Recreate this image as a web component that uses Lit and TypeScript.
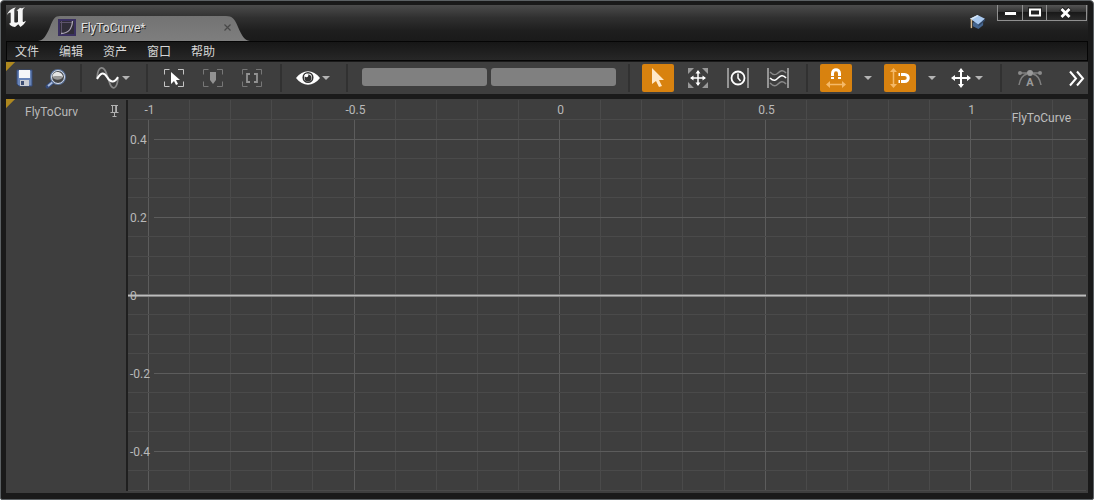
import { LitElement, html, svg, css } from "lit";
import { customElement, state } from "lit/decorators.js";

const caret = html`<svg class="caret" width="8" height="4" viewBox="0 0 8 4" aria-hidden="true"><path d="M0 0h8L4 4z" fill="currentColor" /></svg>`;

const corners = (color: string) => svg`<path d="M.5 5.500V.5h5M14 .5h5.500v5M19.500 12.500v5H14M5.500 17.500h-5v-5" fill="none" stroke=${color} />`;

const MENUS = ["文件", "编辑", "资产", "窗口", "帮助"];

@customElement("curve-graph")
class CurveGraph extends LitElement {
  @state() private w = 960;
  @state() private h = 394;
  private observer?: ResizeObserver;

  static styles = css`
    :host { display: block; position: relative; min-width: 0; overflow: hidden; }
    svg { position: absolute; inset: 0; display: block; width: 100%; height: 100%; }
    text { font: 12px Roboto, "Noto Sans", sans-serif; fill: #b9b9b9; }
    .minor { stroke: #4a4a4a; }
    .major { stroke: #5c5c5c; }
    .name { position: absolute; top: 11px; right: 17px; font: 12px/16px Roboto, "Noto Sans", sans-serif; color: #bdbdbd; }
  `;

  connectedCallback() {
    super.connectedCallback();
    this.observer = new ResizeObserver(([entry]) => {
      this.w = Math.round(entry.contentRect.width);
      this.h = Math.round(entry.contentRect.height);
    });
    this.observer.observe(this);
  }

  disconnectedCallback() {
    this.observer?.disconnect();
    super.disconnectedCallback();
  }

  render() {
    const { w, h } = this;
    const unitX = w * 0.4282;
    const unitY = 390;
    const zeroX = w * 0.4496;
    const zeroY = Math.round(h / 2) - 1;
    const px = (v: number) => Math.floor(v) + 0.5;
    const lines = [];
    const labels = [];
    for (let i = -12; i <= 14; i++) {
      const x = px(zeroX + (i * unitX) / 10);
      if (x < 0 || x > w - 3) continue;
      const major = i % 5 === 0;
      lines.push(svg`<line class=${major ? "major" : "minor"} x1=${x} x2=${x} y1=${major ? 20 : 1} y2=${h - 2} />`);
      if (major) labels.push(svg`<text x=${x + 1} y="15" text-anchor="middle">${i / 10}</text>`);
    }
    for (let i = -12; i <= 12; i++) {
      const y = px(zeroY - (i * unitY) / 20);
      if (y < 8 || y > h - 1) continue;
      const major = i % 4 === 0;
      lines.push(svg`<line class=${major ? "major" : "minor"} x1=${major ? 26 : 0} x2=${w - 2} y1=${y} y2=${y} />`);
      if (major) labels.push(svg`<text x="2" y=${y + 4}>${i / 20}</text>`);
    }
    return html`
      <svg role="img" aria-label="FlyToCurve">
        ${lines}
        <rect x="0" y=${zeroY - 1} width=${w - 2} height="1" fill="#777" />
        <rect x="0" y=${zeroY} width=${w - 2} height="1" fill="#bdbdbd" />
        <rect x="0" y=${zeroY + 1} width=${w - 2} height="1" fill="#858585" />
        ${labels}
      </svg>
      <div class="name">FlyToCurve</div>
    `;
  }
}

@customElement("app-root")
class AppRoot extends LitElement {
  static styles = css`
    :host {
      display: flex; flex-direction: column; box-sizing: border-box; min-height: 100vh;
      padding: 4px 5px 6px; border: 1px solid #5c6164; border-radius: 4px 4px 2px 2px;
      background: #1a1a1a; color: #c8c8c8;
      font: 12px/16px Roboto, "Noto Sans CJK SC", "Noto Sans", sans-serif;
    }
    * { box-sizing: border-box; }
    button { display: flex; align-items: center; justify-content: center; margin: 0; padding: 0; border: 0; background: none; color: #b4b4b4; font: inherit; }
    svg { display: block; flex: none; overflow: visible; }
    .title { display: flex; align-items: flex-start; height: 36px; padding-left: 1px; background: linear-gradient(#4c4c4c, #303030 35%, #1e1e1e 72%, #1a1a1a); }
    .logo { margin-top: 2px; }
    .tab { position: relative; display: flex; align-items: center; align-self: flex-end; width: 212px; height: 25px; margin-left: 10px; padding: 0 19px 2px 20px; color: #e2e2e2; text-shadow: 1px 1px 0 #222; }
    .shape { position: absolute; inset: 0; width: 100%; height: 100%; }
    .tab > * + * { position: relative; }
    .tab-name { flex: 1; margin-left: 5px; }
    .close { width: 8px; height: 8px; }
    .tutorial { margin: 10px 11px 0 auto; }
    .caption { display: flex; height: 16px; margin-right: 1px; border: 1px solid #909090; border-top: 0; }
    .caption button { width: 25px; background: linear-gradient(#555, #333 45%, #191919 50%, #2b2b2b); border-right: 1px solid #909090; }
    .caption button + button { width: 24px; }
    .caption button:last-child { width: 39px; padding-right: 2px; border: 0; }
    .menus { display: flex; height: 20px; border: 1px solid #050505; background: linear-gradient(#161616, #272727); }
    .menus button { width: 44px; height: 18px; color: #d6d6d6; justify-content: flex-start; padding: 1px 0 0 8px; }
    .tools, .outline { background: linear-gradient(135deg, #ae881f 6px, #3e3e3e 7px); }
    .tools { display: flex; align-items: center; height: 32px; margin-top: 1px; overflow: hidden; }
    .group { display: flex; align-items: center; flex: none; padding: 0 4px; gap: 8px; }
    .first { padding: 0 0 0 2px; gap: 0; }
    .frames { padding: 0 4px 0 2px; gap: 7px; }
    .flush { padding: 0; }
    .fields { gap: 4px; padding: 0 4px 0 6px; }
    .sep { flex: none; width: 2px; height: 28px; margin: 0 8px; background: #313131; }
    .tool { width: 32px; height: 28px; border-radius: 2px; }
    .on { background: #d8820f; }
    .drop { width: 16px; height: 28px; }
    .split { width: 48px; height: 28px; padding-right: 2px; gap: 2px; }
    .field { width: 125px; height: 18px; margin: 0 0 2px; padding: 0 4px; border: 0; border-radius: 3px; background: #808080; color: #111; font: inherit; outline: 0; }
    .more { margin-left: auto; width: 22px; height: 28px; flex: none; color: #fff; }
    .work { flex: 1; display: grid; grid-template-columns: 120px 2px minmax(0, 1fr); margin-top: 5px; background: #3e3e3e; }
    .outline { display: flex; align-items: flex-start; padding: 5px 7px 0 19px; }
    .curve { width: 53px; overflow: hidden; white-space: nowrap; color: #b9b9b9; }
    .pin { margin-left: auto; }
    .divider { background: #1f1f1f; margin: 1px 0 2px; }
  `;

  private sep() {
    return html`<span class="sep"></span>`;
  }

  render() {
    return html`
      <header class="title">
        <svg class="logo" width="21" height="21" viewBox="0 0 21 20" preserveAspectRatio="none" fill="#f6f6f6" role="img" aria-label="Unreal Engine">
          <path d="M0 7.500C1.500 3.500 5 1 9 .5 7.500 1.500 7.300 2.300 7.300 3.500v10.200c0 1.500 2.500 1.500 3.700.3V5c0-1.200-.5-1.600-1.500-1.800C11 2.500 12 2 13 .8c1 .8 3 .2 5-.8-1.500 1.300-2.300 2.300-2.300 3.700V13c0 1.500 1 1.700 3.300.2-1.200 2.800-3.500 4.500-5.500 5.800L11.300 16.500 8 19c-3.500-.2-5.700-2-5.700-3.500 1 .2 1.400-.2 1.400-1.500V6c0-1.300-1.500-.8-3.700 1.500z" />
        </svg>
        <div class="tab">
          <svg class="shape" viewBox="0 0 212 25" preserveAspectRatio="none" aria-hidden="true">
            <defs><linearGradient id="t" x2="0" y2="1"><stop stop-color="#737373" /><stop offset="1" stop-color="#7e7e7e" /></linearGradient></defs>
            <path d="M0 25C6 24 8 20 12 11 15 3 17 0 22 0H188c6 0 9 3 12 11 4 9 6 13 12 14z" fill="url(#t)" />
          </svg>
          <svg width="18" height="17" viewBox="0 0 18 17" aria-hidden="true">
            <path d="M0 0h18v17H0z" fill="#3a3060" /><path d="M2 2h14v13H2z" fill="#302d38" />
            <path d="M3.500 2v12.500M2 3.500h13" stroke="#5d536c" /><path d="M3 14.500C11 14 14 10 14.500 2" fill="none" stroke="#aca6b6" stroke-width="1.300" />
          </svg>
          <span class="tab-name">FlyToCurve*</span>
          <button class="close" aria-label="Close tab"><svg width="7" height="7" viewBox="0 0 7 7"><path d="M.5.5l6 6M6.500.5l-6 6" stroke="#484848" stroke-width="1.200" /></svg></button>
        </div>
        <button class="tutorial" aria-label="Tutorials">
          <svg width="17" height="15" viewBox="0 0 18 16">
            <path d="M4 8v4l6 3 5-4V6z" fill="#45658e" /><path d="M1 4l8-4 8 4-7 6z" fill="#a8c8ee" /><path d="M1 4l8-4 1 1-7 4z" fill="#d8e8f8" /><path d="M10 10l7-6v2l-7 6z" fill="#314563" /><path d="M2.500 4.500V14" stroke="#d7bb91" stroke-width="1.500" />
          </svg>
        </button>
        <div class="caption">
          <button aria-label="Minimize"><svg width="13" height="6" viewBox="0 0 13 6"><path d="M.5 1.500h12v4H.5z" fill="#fff" stroke="#222" /></svg></button>
          <button aria-label="Maximize"><svg width="14" height="11" viewBox="0 0 14 11"><path d="M0 0h14v11H0z" fill="#222" /><path d="M2 2.500h10v6H2z" fill="none" stroke="#fff" stroke-width="2" /></svg></button>
          <button aria-label="Close"><svg width="13" height="12" viewBox="0 0 13 12"><path d="M2 1.500l9 9M11 1.500l-9 9" stroke="#222" stroke-width="5" /><path d="M2.500 2l8 8M10.500 2l-8 8" stroke="#fff" stroke-width="2.800" /></svg></button>
        </div>
      </header>

      <nav class="menus">${MENUS.map((m) => html`<button>${m}</button>`)}</nav>

      <div class="tools" role="toolbar">
        <div class="group first">
          <button class="tool" aria-label="Save">
            <svg width="17" height="18" viewBox="0 0 17 18"><path d="M1 1h15v16H3l-2-2z" fill="#6985b8" stroke="#344b7b" /><path d="M3 1h11v8H3z" fill="#f5f6f8" /><path d="M4 11h9v6H4z" fill="#c9ccd2" /><path d="M5 12h3v4H5z" fill="#3c4d72" /></svg>
          </button>
          <button class="tool" aria-label="Browse">
            <svg width="20" height="19" viewBox="0 0 20 19"><path d="M1.500 17.500l6-5" stroke="#344b7b" stroke-width="4" stroke-linecap="round" /><path d="M2 17l6-5" stroke="#a9bbdc" stroke-width="2" /><circle cx="12" cy="8" r="7" fill="#444" stroke="#5b7198" stroke-width="2" /><circle cx="12" cy="8" r="6.500" fill="none" stroke="#d9e0ea" /><path d="M6.500 8c0-4 3-5.500 6-5 3 .5 4.500 3 4.500 5-3-1-7-1-10.500 0z" fill="#e4e4e4" /><path d="M6.500 8c3-1.500 7-1.500 10.500 0-1 3-9 4-10.500 0z" fill="#999" /></svg>
          </button>
        </div>
        ${this.sep()}
        <button class="split" aria-label="Curve options">
          <svg width="24" height="24" viewBox="0 0 24 24" fill="none"><path d="M1 12C2 -1 8-1 11 9l2 6c3 10 8 9 9-3" stroke="#888" stroke-width="1.800" /><path d="M1 13c4-7 7-7 10-2s7 7 11 0" stroke="#fff" stroke-width="2" /></svg>${caret}
        </button>
        ${this.sep()}
        <div class="group frames">
          <button class="tool" aria-label="Frame selection"><svg width="20" height="18" viewBox="0 0 20 18">${corners("#c4c4c4")}<path d="M7 3v12l3-3 2 4 2-1-2-4h4z" fill="#fff" /></svg></button>
          <button class="tool" aria-label="Frame marker"><svg width="20" height="18" viewBox="0 0 20 18">${corners("#777")}<path d="M7 3h6v8l-3 4-3-4z" fill="#929292" /></svg></button>
          <button class="tool" aria-label="Frame range"><svg width="20" height="18" viewBox="0 0 20 18">${corners("#777")}<path d="M8 5H5v8h3M12 5h3v8h-3" fill="none" stroke="#929292" stroke-width="1.800" /></svg></button>
        </div>
        ${this.sep()}
        <button class="split" aria-label="View options">
          <svg width="24" height="14" viewBox="0 0 24 14"><path d="M0 7C7-2 17-2 24 7 17 16 7 16 0 7z" fill="#fff" /><circle cx="12" cy="6.500" r="4.800" fill="#fff" stroke="#333" stroke-width="1.500" /><circle cx="12" cy="7" r="3.500" fill="#333" /><circle cx="10.500" cy="4.500" r="1.800" fill="#fff" /></svg>${caret}
        </button>
        ${this.sep()}
        <div class="group fields">
          <input class="field" aria-label="Time" />
          <input class="field" aria-label="Value" />
        </div>
        ${this.sep()}
        <div class="group">
          <button class="tool on" aria-label="Select" aria-pressed="true"><svg width="16" height="22" viewBox="0 0 16 22"><path d="M2 1v16l4-3 3 6 3-1-3-6h5z" fill="#ffe8c7" /></svg></button>
          <button class="tool" aria-label="Transform">
            <svg width="20" height="20" viewBox="0 0 20 20"><path d="M0 6V0h6zM14 0h6v6zM20 14v6h-6zM6 20H0v-6z" fill="#999" /><path d="M10 3v14M3 10h14" stroke="#fff" stroke-width="1.500" /><path d="M10 2l2.500 3.500h-5zM18 10l-3.500 2.500v-5zM10 18l-2.500-3.500h5zM2 10l3.500-2.500v5z" fill="#fff" /></svg>
          </button>
          <button class="tool" aria-label="Retime">
            <svg width="22" height="22" viewBox="0 0 22 22" fill="none"><path d="M1 1v20M21 1v20" stroke="#aaa" stroke-width="1.600" /><circle cx="11" cy="11" r="6.500" stroke="#fff" stroke-width="1.800" /><path d="M11 6.500V11l2.500 3" stroke="#fff" stroke-width="1.500" /></svg>
          </button>
          <button class="tool" aria-label="Multi scale">
            <svg width="22" height="22" viewBox="0 0 22 22" fill="none"><path d="M1 1v20M21 1v20" stroke="#aaa" stroke-width="1.600" /><path d="M3 5c4 4 6 3 8 1s5-4 8 0M3 16c4 4 6 3 8 1s5-4 8 0" stroke="#888" stroke-width="1.500" /><path d="M3 11c4 4 6 2 8 0s5-4 8 0" stroke="#fff" stroke-width="1.600" /></svg>
          </button>
        </div>
        ${this.sep()}
        <div class="group">
          <button class="tool on" aria-label="Snap time" aria-pressed="true">
            <svg width="20" height="20" viewBox="0 0 20 20" fill="none"><path d="M6.500 11V5.500c0-5 7-5 7 0V11" stroke="#fff" stroke-width="3" /><path d="M4 8.500h12" stroke="#d8820f" /><path d="M3 16.500h14" stroke="#f5b968" stroke-width="1.500" /><path d="M4 13l-4 3.500L4 20zM16 13l4 3.500-4 3.500z" fill="#f5b968" /></svg>
          </button>
          <button class="drop" aria-label="Time snap options">${caret}</button>
          <button class="tool on" aria-label="Snap value" aria-pressed="true">
            <svg width="20" height="20" viewBox="0 0 20 20" fill="none"><path d="M8.500 6.500h6c5 0 5 7 0 7h-6" stroke="#fff" stroke-width="3" /><path d="M10.500 4v12" stroke="#d8820f" /><path d="M3.500 3v14" stroke="#f5b968" stroke-width="1.500" /><path d="M0 4l3.500-4L7 4zM0 16l3.500 4L7 16z" fill="#f5b968" /></svg>
          </button>
          <button class="drop" aria-label="Value snap options">${caret}</button>
        </div>
        <div class="group flush">
          <button class="split" aria-label="Axis snapping">
            <svg width="20" height="20" viewBox="0 0 20 20"><path d="M10 3v14M3 10h14" stroke="#fff" stroke-width="2" /><path d="M10 0l3 4H7zM20 10l-4 3V7zM10 20l-3-4h6zM0 10l4-3v6z" fill="#fff" /></svg>
            <span></span>${caret}
          </button>
        </div>
        ${this.sep()}
        <div class="group">
          <button class="tool" aria-label="Auto tangents">
            <svg width="24" height="18" viewBox="0 0 24 18" fill="none"><path d="M2 4h20M1 16C2 10 5 6 9 5M23 16c-1-6-4-10-8-11" stroke="#808080" stroke-width="1.500" /><circle cx="2" cy="4" r="2" fill="#8a8a8a" /><circle cx="22" cy="4" r="2" fill="#8a8a8a" /><circle cx="12" cy="4" r="3" fill="#999" /><text x="12" y="17" text-anchor="middle" font-family="Roboto" font-size="11" font-weight="700" fill="#999">A</text></svg>
          </button>
        </div>
        <button class="more" aria-label="More tools"><svg width="16" height="15" viewBox="0 0 16 15" fill="none"><path d="M1 .5l6 7-6 7M8 .5l6 7-6 7" stroke="#fff" stroke-width="2" /></svg></button>
      </div>

      <main class="work">
        <aside class="outline">
          <span class="curve">FlyToCurve</span>
          <button class="pin" aria-label="Pin curve"><svg width="9" height="14" viewBox="0 0 9 14" fill="none"><path d="M1 1.500h7M2.500 1v7M6.500 1v7M.5 8.500h8M4.500 9v4M2.500 12.500h4" stroke="#b0b0b0" /><path d="M5 2h1v6H5z" fill="#999" /></svg></button>
        </aside>
        <span class="divider"></span>
        <curve-graph></curve-graph>
      </main>
    `;
  }
}
